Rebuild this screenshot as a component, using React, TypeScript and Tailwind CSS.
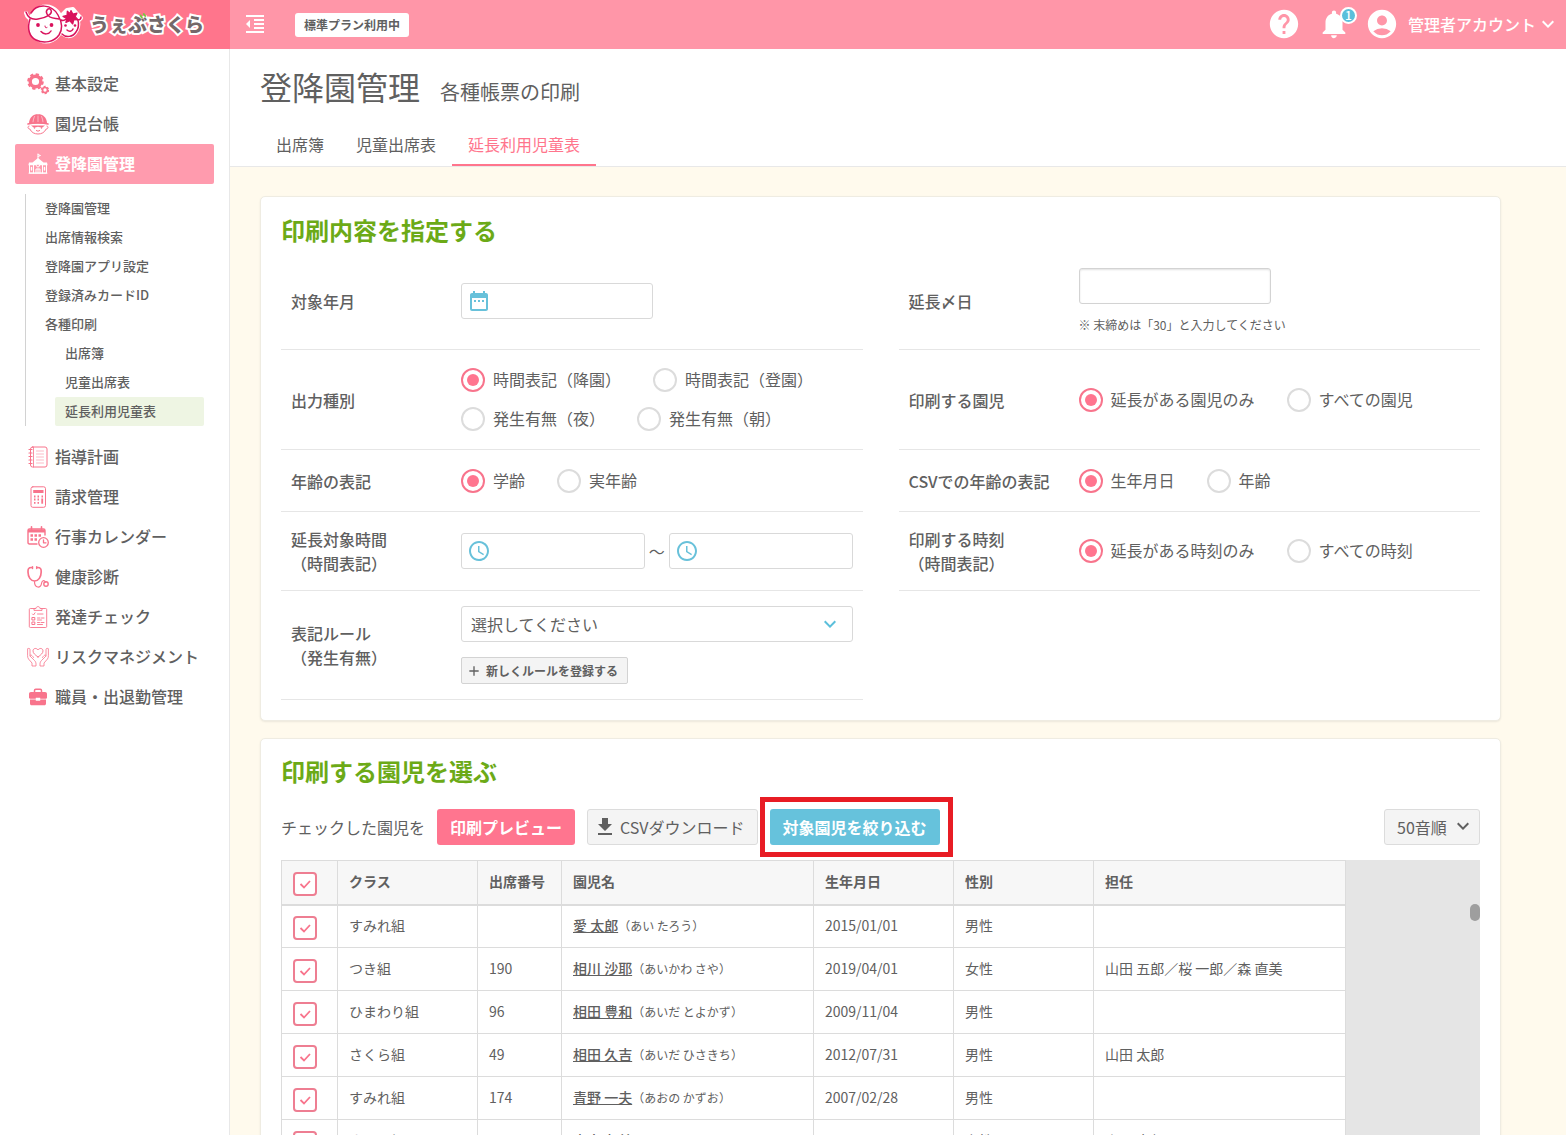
import React, { useState } from 'react';
import {
  MdAccessTime,
  MdAccountCircle,
  MdAdd,
  MdDateRange,
  MdExpandMore,
  MdFormatIndentDecrease,
  MdGetApp,
  MdHelp,
  MdNotifications,
} from 'react-icons/md';

/* ---------- logo ---------- */

function LogoMark() {
  return (
    <svg viewBox="0 0 60 44" className="mb-1 h-11 w-[60px] shrink-0" fill="none" aria-hidden="true">
      <g fill="#fff" stroke="#fff" strokeWidth="4" strokeLinejoin="round" strokeLinecap="round">
        <ellipse cx="22" cy="23" rx="16" ry="17.500" />
        <path d="M39 13c-3 6-3 14 0 20 4 3 9 3 12-1 3-4 4-8 3-12l3-3-3-3-5-6-6 1z" />
        <path d="M2 12c1 4 4 6 7 6" fill="none" />
      </g>
      <g stroke="#d9135d" strokeWidth="1.500" strokeLinecap="round" strokeLinejoin="round">
        <path d="M6 18c-3 9-1 18 6 21 8 4 18 2 23-5 4-6 3-13-1-20C28 3 13 2 7 12" />
        <path d="M2 11c2 6 6 8 12 7 8-1 15-5 13-9-2-3-6 0-4 4 2 5 8 4 12 5" />
        <path d="M38 33c4 4 11 3 14-2 3-4 3-8 2-12M53.500 19c2 0 3.500-1 3.500-3" />
        <path d="M37 19c2 1 4 0 5-1" />
        <path d="M17 30.500c3 3.500 8 3 10-.5" />
        <path d="M43 29c2 2 5 1.500 6-1" />
        <path d="M21 25c0 2 1 2 2 1.500" strokeWidth="1" />
      </g>
      <g fill="#d9135d">
        <circle cx="14" cy="24" r="1.900" />
        <circle cx="27.500" cy="24" r="1.900" />
        <circle cx="41.500" cy="24.500" r="1.300" />
        <circle cx="51" cy="24.500" r="1.300" />
        <path
          d="M47 9.500l1.800 3.500 4.200-1-1.800 3.700 2.800 3-4.300.3-1 4-3-3.300-3.800 1.800.7-3.900-3.600-2.200 4-1.200.3-4 2.700 2.200z"
          stroke="#d9135d"
          strokeWidth="1.200"
          strokeLinejoin="round"
        />
      </g>
    </svg>
  );
}

/* ---------- navigation icons ---------- */

type IconProps = { children: React.ReactNode };

function NavSvg({ children }: IconProps) {
  return (
    <svg
      viewBox="0 0 22 22"
      className="size-[22px] shrink-0"
      fill="none"
      stroke="currentColor"
      strokeWidth="1"
      strokeLinecap="round"
      strokeLinejoin="round"
      aria-hidden="true"
    >
      {children}
    </svg>
  );
}

const GearIcon = (
  <NavSvg>
    <circle cx="8.500" cy="8.500" r="5.300" strokeWidth="3.400" />
    <circle cx="8.500" cy="8.500" r="7.200" strokeWidth="2.200" strokeLinecap="butt" strokeDasharray="3.200 2.455" />
    <circle cx="18" cy="17" r="2.500" strokeWidth="1.700" />
    <circle cx="18" cy="17" r="3.600" strokeWidth="1.200" strokeLinecap="butt" strokeDasharray="2.100 1.670" />
  </NavSvg>
);

const ChildIcon = (
  <NavSvg>
    <path d="M2 10.500C2 5 6 1 11 1s9 4 9 9.500z" fill="currentColor" stroke="none" />
    <path d="M11 0.500v1M11 3v7M7.500 3.500C6.500 5.500 6 8 6 10M14.500 3.500C15.500 5.500 16 8 16 10" stroke="#fff" strokeWidth=".5" />
    <path d="M1 11c5-1.500 15-1.500 20 0" strokeWidth="1.600" />
    <path d="M2 13c-1.500 0-1.500 3 .8 3C4.500 19.500 7.500 21 11 21s6.500-1.500 8.200-5c2.300 0 2.300-3 .8-3" />
    <path d="M4 12.500h14l-3 2.300-4-1-4 1z" fill="currentColor" stroke="none" />
    <path d="M9.300 17.500c1 .9 2.400.9 3.400 0" />
    <circle cx="7.500" cy="15" r=".7" fill="currentColor" stroke="none" />
    <circle cx="14.500" cy="15" r=".7" fill="currentColor" stroke="none" />
  </NavSvg>
);

const SchoolIcon = (
  <NavSvg>
    <path d="M11 6V1M11 1.500l2.500 1L11 3.500" />
    <path d="M11 5l5.500 4.500h3.500l.6 2.800H1.400L2 9.500h3.500z" fill="currentColor" stroke="none" />
    <path d="M2.500 12v8h17v-8" />
    <path d="M6.500 12l4.500-3.500 4.500 3.500v8M6.500 12v8" />
    <circle cx="11" cy="12.500" r="1.500" fill="#ff9bae" />
    <path d="M9 20v-4h4v4M11 16v4" />
    <path d="M4.500 14.500v2.500M17.500 14.500v2.500" strokeWidth="1.400" />
    <path d="M2 20.200h18" />
  </NavSvg>
);

const NotebookIcon = (
  <NavSvg>
    <rect x="3.500" y="1" width="16.500" height="20" rx="2" />
    <path d="M6.500 1v20" strokeWidth=".8" />
    <path d="M2 3.500h3M2 7h3M2 10.500h3M2 14h3M2 17.500h3" strokeWidth="1.200" />
    <path d="M9.500 5h7M9.500 8h7M9.500 11h7M9.500 14h7M9.500 17h7" strokeWidth=".5" />
  </NavSvg>
);

const CalculatorIcon = (
  <NavSvg>
    <rect x="4" y=".8" width="14.500" height="20.500" rx="1.800" />
    <rect x="6.200" y="4" width="10.300" height="3" fill="currentColor" stroke="none" />
    <path d="M7 10.500h1.500M10.500 10.500H12M14.500 10.500h1.500M7 13.500h1.500M10.500 13.500H12M7 16.800h1.500M10.500 16.800H12" strokeWidth="1.800" strokeLinecap="butt" />
    <path d="M15.200 12.500v5.200" strokeWidth="1.800" strokeLinecap="butt" />
  </NavSvg>
);

const CalendarIcon = (
  <NavSvg>
    <path d="M10 18H2.500C1.500 18 1 17.500 1 16.500V4.500C1 3.500 1.500 3 2.500 3h14c1 0 1.500.500 1.500 1.500V9" strokeWidth="1.400" />
    <path d="M1 3.500h17v3H1z" fill="currentColor" stroke="none" />
    <path d="M4.500.8v3M14.500.8v3" strokeWidth="1.600" />
    <path d="M3.500 9.500H6M7.500 9.500H10M11.500 9.500H14M3.500 13.500H6M7.500 13.500H10" strokeWidth="2.300" strokeLinecap="butt" />
    <circle cx="16.500" cy="16.500" r="4.800" strokeWidth="1.300" />
    <path d="M16.500 13.800v3h2.500" strokeWidth="1.300" />
  </NavSvg>
);

const StethoscopeIcon = (
  <NavSvg>
    <path d="M4.500 1.500C1.500 1.500.9 3 1 6c.1 5 2.600 9 6.600 9s6.500-4 6.600-9c.1-3-.6-4.500-3.600-4.500" strokeWidth="1.700" />
    <path d="M5.500.8v1.600M9.700.8v1.600" strokeWidth="1.500" />
    <path d="M7.500 15.500c0 7 6.500 7 7 2 .3-3 2.500-4 4-1.500" strokeWidth="1.200" />
    <circle cx="19" cy="18" r="2.200" strokeWidth="1.400" />
  </NavSvg>
);

const ClipboardIcon = (
  <NavSvg>
    <path d="M7 2.500H3.300c-.6 0-1 .4-1 1v17c0 .6.400 1 1 1h15.400c.6 0 1-.4 1-1v-17c0-.6-.4-1-1-1H15" strokeWidth=".9" />
    <path d="M7 4V2.500h2c0-2.500 4-2.500 4 0h2V4z" strokeWidth=".9" />
    <path d="M5.500 8l1 1 1.500-2.200" strokeWidth=".9" />
    <rect x="5.300" y="11.500" width="2.500" height="2.500" />
    <rect x="5.300" y="16" width="2.500" height="2.500" />
    <path d="M10.500 8H16M10.500 12h2.500M14.500 12H17M10.500 14h4M10.500 16.500h2M14 16.500h3M10.500 18.500h5" strokeWidth=".9" />
  </NavSvg>
);

const HandsHeartIcon = (
  <NavSvg>
    <path d="M11 11C8 8.800 6 7.200 6 4.900 6 2.200 9.500 1.500 11 4c1.500-2.500 5-1.800 5 .9 0 2.300-2 3.900-5 6.100z" strokeWidth=".9" />
    <path d="M1 2.500c1.500-.6 2 .2 2 1.500v6l4.500 4.500c1 1 1.500 2 1.500 3.500V20H5v-3l-3.500-4C.8 12 .6 11 .6 10z" strokeWidth=".8" />
    <path d="M3 9.500c1-1 1.800-.5 3.500 2" strokeWidth=".8" />
    <path d="M21 2.500c-1.500-.6-2 .2-2 1.500v6l-4.500 4.500c-1 1-1.500 2-1.500 3.500V20h4v-3l3.500-4c.7-1 .9-2 .9-3z" strokeWidth=".8" />
    <path d="M19 9.500c-1-1-1.800-.5-3.500 2" strokeWidth=".8" />
  </NavSvg>
);

const BriefcaseIcon = (
  <NavSvg>
    <path d="M7.500 6V4.500c0-.8.400-1.200 1.200-1.200h4.600c.8 0 1.200.4 1.200 1.200V6" strokeWidth="1.500" />
    <path d="M4 6h14c1.400 0 2 .7 2 2v3.500c0 .8-.4 1.200-1.200 1.200h-5.600v-1H8.800v1H3.200c-.8 0-1.200-.4-1.200-1.200V8c0-1.300.6-2 2-2z" fill="currentColor" stroke="none" />
    <path d="M3 13.500h5.800v1.300h4.400v-1.300H19v3.900c0 1.200-.6 1.800-1.800 1.800H4.800c-1.200 0-1.800-.6-1.800-1.800z" fill="currentColor" stroke="none" />
  </NavSvg>
);

/* ---------- form parts ---------- */

function Radio({ name, label, defaultChecked }: { name: string; label: string; defaultChecked?: boolean }) {
  return (
    <label className="flex h-[30px] items-center gap-2 whitespace-nowrap">
      <input
        type="radio"
        name={name}
        defaultChecked={defaultChecked}
        className="grid size-6 shrink-0 appearance-none place-content-center rounded-full border-2 border-[#dcdcdc] bg-white before:size-3 before:rounded-full before:content-[''] checked:border-[#f8748c] checked:before:bg-[#ff758f]"
      />
      <span className="pb-[2px]">{label}</span>
    </label>
  );
}

function RadioRow({ name, options }: { name: string; options: string[] }) {
  return (
    <div className="flex flex-wrap gap-x-8 gap-y-[9px]">
      {options.map((o, i) => (
        <Radio key={o} name={name} label={o} defaultChecked={i === 0} />
      ))}
    </div>
  );
}

function Field({ label, sub, htmlFor, children }: { label: string; sub?: string; htmlFor?: string; children: React.ReactNode }) {
  const text = (
    <>
      {label}
      {sub && <span className="block">{sub}</span>}
    </>
  );
  return (
    <div className="flex min-h-[62px] items-center border-b border-[#e6e6e6]" role="group" aria-label={label}>
      <div className="w-[180px] shrink-0 pl-[10px] font-medium leading-6">
        {htmlFor ? <label htmlFor={htmlFor}>{text}</label> : text}
      </div>
      <div className="min-w-0 flex-1 py-[15px] pr-[10px]">{children}</div>
    </div>
  );
}

function IconInput({ id, label, icon, className }: { id: string; label: string; icon: React.ReactNode; className: string }) {
  return (
    <div className={'flex h-9 items-center rounded-[3px] border border-[#d9d9d9] bg-white pl-[5px] text-[#68c1da] ' + className}>
      {icon}
      <input id={id} aria-label={label} type="text" className="h-full min-w-0 flex-1 px-2 text-[#606060] outline-none" />
    </div>
  );
}

function Check({ label }: { label: string }) {
  const [on, setOn] = useState(true);
  return (
    <label className="relative mt-[5px] block size-6">
      <input
        type="checkbox"
        aria-label={label}
        checked={on}
        onChange={() => setOn(!on)}
        className="block size-6 appearance-none rounded-[4px] border-2 border-[#ee7e92] bg-white"
      />
      {on && (
        <svg viewBox="0 0 24 24" className="pointer-events-none absolute inset-0 size-6" fill="none" stroke="#f8748c" strokeWidth="1.800" aria-hidden="true">
          <path d="M7.500 12l3.500 3.500 6-6.500" />
        </svg>
      )}
    </label>
  );
}

/* ---------- data ---------- */

const navTop = [
  { label: '基本設定', icon: GearIcon },
  { label: '園児台帳', icon: ChildIcon },
];

const navBottom = [
  { label: '指導計画', icon: NotebookIcon },
  { label: '請求管理', icon: CalculatorIcon },
  { label: '行事カレンダー', icon: CalendarIcon },
  { label: '健康診断', icon: StethoscopeIcon },
  { label: '発達チェック', icon: ClipboardIcon },
  { label: 'リスクマネジメント', icon: HandsHeartIcon },
  { label: '職員・出退勤管理', icon: BriefcaseIcon },
];

const subNav = ['登降園管理', '出席情報検索', '登降園アプリ設定', '登録済みカードID', '各種印刷'];
const printNav = ['出席簿', '児童出席表', '延長利用児童表'];

const children = [
  { group: 'すみれ組', no: '', name: '愛 太郎', kana: 'あい たろう', birth: '2015/01/01', sex: '男性', staff: '' },
  { group: 'つき組', no: '190', name: '相川 沙耶', kana: 'あいかわ さや', birth: '2019/04/01', sex: '女性', staff: '山田 五郎／桜 一郎／森 直美' },
  { group: 'ひまわり組', no: '96', name: '相田 豊和', kana: 'あいだ とよかず', birth: '2009/11/04', sex: '男性', staff: '' },
  { group: 'さくら組', no: '49', name: '相田 久吉', kana: 'あいだ ひさきち', birth: '2012/07/31', sex: '男性', staff: '山田 太郎' },
  { group: 'すみれ組', no: '174', name: '青野 一夫', kana: 'あおの かずお', birth: '2007/02/28', sex: '男性', staff: '' },
  { group: 'さくら組', no: '52', name: '青木 友美', kana: 'あおき ともみ', birth: '2012/05/14', sex: '女性', staff: '山田 太郎' },
];

function NavItem({ label, icon }: { label: string; icon: React.ReactNode }) {
  return (
    <a href="#" className="flex h-10 items-center gap-[6px] pl-3 font-medium">
      <span className="text-[#f8748c]">{icon}</span>
      <span className="pb-[2px]">{label}</span>
    </a>
  );
}

const cardClass = 'rounded-[5px] border border-[#efece2] bg-white px-5 shadow-[0_1px_2px_rgba(0,0,0,0.08)]';
const headingClass = 'text-2xl leading-9 font-bold text-[#6caa17]';
const subLinkClass = 'block pb-[2px] leading-[27px]';

export default function App() {
  return (
    <div
      lang="ja"
      className="flex h-screen flex-col overflow-hidden bg-white font-['Noto_Sans_CJK_JP',sans-serif] text-base leading-6 text-[#606060]"
    >
      <header className="flex h-[49px] shrink-0 items-center bg-[#ff96a8] text-white">
        <a href="#" className="flex h-full w-[230px] shrink-0 items-center bg-[#ff758c] pl-6" aria-label="うぇぶさくら">
          <LogoMark />
          <span className="relative mb-[2px] ml-[6px] text-[19px] font-black text-[#75686a] [-webkit-text-stroke:4px_white] [paint-order:stroke_fill]">
            うぇぶさくら
            <svg viewBox="0 0 8 8" className="absolute top-0 left-[49px] size-2" fill="none" stroke="#7cc242" strokeWidth="2" strokeLinecap="round" aria-hidden="true">
              <path d="M1.500 3.500l1.300 2M4.800 2l1.400 2" />
            </svg>
          </span>
        </a>
        <button type="button" aria-label="メニューを閉じる" className="ml-[13px] pb-px">
          <MdFormatIndentDecrease size={24} />
        </button>
        <span className="ml-[28px] rounded-[3px] bg-white px-[9px] text-xs leading-6 font-bold text-[#606060]">標準プラン利用中</span>
        <div className="ml-auto flex items-center pb-[2px]">
          <button type="button" aria-label="ヘルプ" className="mr-4">
            <MdHelp size={34} />
          </button>
          <button type="button" aria-label="お知らせ" className="relative mr-[14px]">
            <MdNotifications size={34} />
            <span className="absolute top-0 left-[23px] flex size-[17px] items-center justify-center rounded-full border-2 border-white bg-[#5bbfdb] text-xs leading-none font-medium">
              1
            </span>
          </button>
          <button type="button" className="flex items-center pr-[6px] font-medium">
            <MdAccountCircle size={34} />
            <span className="ml-[9px]">管理者アカウント</span>
            <MdExpandMore size={24} />
          </button>
        </div>
      </header>

      <div className="flex min-h-0 flex-1">
        <nav className="w-[230px] shrink-0 border-r border-[#e8e8e8] px-[15px] pt-[15px]" aria-label="メインメニュー">
          {navTop.map((n) => (
            <NavItem key={n.label} {...n} />
          ))}
          <a href="#" className="flex h-10 items-center gap-[6px] rounded-[2px] bg-[#ff9bae] pl-3 font-bold text-white">
            {SchoolIcon}
            <span className="pb-[2px]">登降園管理</span>
          </a>
          <div className="mt-[10px] mb-[11px] ml-[10px] border-l border-[#d2d2d2] pr-[10px] pl-[19px] text-[13px] font-medium">
            {subNav.map((s) => (
              <a key={s} href="#" className={subLinkClass}>
                {s}
              </a>
            ))}
            <div className="ml-[10px]">
              {printNav.map((s, i) => (
                <a key={s} href="#" className={subLinkClass + ' pl-[10px]' + (i === 2 ? ' rounded-[2px] bg-[#eef5e3]' : '')}>
                  {s}
                </a>
              ))}
            </div>
          </div>
          {navBottom.map((n) => (
            <NavItem key={n.label} {...n} />
          ))}
        </nav>

        <main className="min-w-0 flex-1 overflow-y-auto bg-[#fffaed] [scrollbar-width:none]">
          <div className="border-b border-[#e8e8e8] bg-white">
            <div className="flex items-baseline gap-5 pt-[13px] pl-[30px]">
              <h1 className="text-[32px] leading-[48px]">登降園管理</h1>
              <p className="text-xl leading-6">各種帳票の印刷</p>
            </div>
            <div className="mt-[14px] flex pl-[30px]" role="tablist">
              <button type="button" role="tab" aria-selected="false" className="h-[42px] border-b-2 border-transparent px-4">
                出席簿
              </button>
              <button type="button" role="tab" aria-selected="false" className="h-[42px] border-b-2 border-transparent px-4">
                児童出席表
              </button>
              <button type="button" role="tab" aria-selected="true" className="h-[42px] border-b-2 border-[#ff758c] px-4 text-[#ff758c]">
                延長利用児童表
              </button>
            </div>
          </div>

          <div className="pt-[29px] pr-[65px] pl-[30px]">
            <section className={cardClass + ' pt-[15px] pb-5'}>
              <h2 className={headingClass}>印刷内容を指定する</h2>
              <div className="mt-[5px] grid grid-cols-2 gap-x-9">
                <Field label="対象年月" htmlFor="month">
                  <IconInput id="month" label="対象年月" icon={<MdDateRange size={24} />} className="w-48" />
                </Field>
                <Field label="延長〆日" htmlFor="closing">
                  <input
                    id="closing"
                    type="text"
                    className="block h-9 w-48 rounded-[3px] border border-[#d3d3d3] bg-white px-2 shadow-[inset_0_1px_2px_rgba(0,0,0,0.12)] outline-none"
                  />
                  <p className="mt-3 text-xs leading-[18px]">※ 末締めは「30」と入力してください</p>
                </Field>

                <Field label="出力種別">
                  <RadioRow name="output" options={['時間表記（降園）', '時間表記（登園）', '発生有無（夜）', '発生有無（朝）']} />
                </Field>
                <Field label="印刷する園児">
                  <RadioRow name="target" options={['延長がある園児のみ', 'すべての園児']} />
                </Field>

                <Field label="年齢の表記">
                  <RadioRow name="age" options={['学齢', '実年齢']} />
                </Field>
                <Field label="CSVでの年齢の表記">
                  <RadioRow name="csv-age" options={['生年月日', '年齢']} />
                </Field>

                <Field label="延長対象時間" sub="（時間表記）">
                  <div className="flex h-12 items-center">
                    <IconInput id="from" label="開始時刻" icon={<MdAccessTime size={24} />} className="min-w-0 flex-1" />
                    <span className="w-6 text-center">～</span>
                    <IconInput id="to" label="終了時刻" icon={<MdAccessTime size={24} />} className="min-w-0 flex-1" />
                  </div>
                </Field>
                <Field label="印刷する時刻" sub="（時間表記）">
                  <RadioRow name="time" options={['延長がある時刻のみ', 'すべての時刻']} />
                </Field>

                <Field label="表記ルール" sub="（発生有無）" htmlFor="rule">
                  <div className="relative">
                    <select id="rule" className="block h-9 w-full appearance-none rounded-[3px] border border-[#d9d9d9] bg-white pl-[9px]">
                      <option>選択してください</option>
                    </select>
                    <MdExpandMore size={24} className="pointer-events-none absolute top-[6px] right-[11px] text-[#5bbfdb]" />
                  </div>
                  <button
                    type="button"
                    className="mt-[15px] flex h-[27px] items-center gap-1 rounded-[2px] border border-[#d3d3d3] bg-[#f4f4f4] pr-[9px] pl-1 text-xs font-bold"
                  >
                    <MdAdd size={16} />
                    新しくルールを登録する
                  </button>
                </Field>
              </div>
            </section>

            <section className={cardClass + ' mt-[17px] pt-[14px]'}>
              <h2 className={headingClass}>印刷する園児を選ぶ</h2>
              <div className="mt-5 flex items-center gap-3">
                <span>チェックした園児を</span>
                <button type="button" className="h-9 rounded-[3px] bg-[#ff758f] px-[13px] font-bold text-white">
                  印刷プレビュー
                </button>
                <button type="button" className="flex h-9 items-center gap-[3px] rounded-[3px] border border-[#dcdcdc] bg-[#f4f4f4] pr-3 pl-[5px]">
                  <MdGetApp size={24} />
                  CSVダウンロード
                </button>
                <div className="relative">
                  <button type="button" className="h-9 rounded-[3px] bg-[#66c2dc] px-[13px] font-bold text-white">
                    対象園児を絞り込む
                  </button>
                  <span className="pointer-events-none absolute -inset-y-3 -right-[13px] -left-[10px] border-[5px] border-[#e81c24]" />
                </div>
                <div className="relative ml-auto">
                  <select aria-label="並び順" className="block h-9 w-24 appearance-none rounded-[3px] border border-[#dcdcdc] bg-[#f4f4f4] pl-3">
                    <option>50音順</option>
                  </select>
                  <MdExpandMore size={24} className="pointer-events-none absolute top-[5px] right-[5px]" />
                </div>
              </div>

              <div className="relative mt-[15px] bg-[#e5e5e5]">
                <table className="w-[1065px] table-fixed border-collapse bg-white text-left text-sm">
                  <colgroup>
                    <col className="w-14" />
                    <col className="w-[140px]" />
                    <col className="w-[84px]" />
                    <col className="w-[252px]" />
                    <col className="w-[140px]" />
                    <col className="w-[140px]" />
                    <col className="w-[252px]" />
                  </colgroup>
                  <thead>
                    <tr className="h-[44px] border-b-2 border-[#dcdcdc] bg-[#f7f7f7] [&>th]:border-x [&>th]:border-t [&>th]:border-[#dcdcdc] [&>th]:px-[11px] [&>th]:pb-[2px]">
                      <th>
                        <Check label="すべて選択" />
                      </th>
                      <th>クラス</th>
                      <th>出席番号</th>
                      <th>園児名</th>
                      <th>生年月日</th>
                      <th>性別</th>
                      <th>担任</th>
                    </tr>
                  </thead>
                  <tbody>
                    {children.map((c) => (
                      <tr key={c.name} className="h-[43px] border-b border-[#dcdcdc] [&>td]:border-x [&>td]:border-[#dcdcdc] [&>td]:px-[11px] [&>td]:pb-[2px]">
                        <td>
                          <Check label={c.name} />
                        </td>
                        <td>{c.group}</td>
                        <td>{c.no}</td>
                        <td>
                          <a href="#" className="font-medium underline">
                            {c.name}
                          </a>
                          <span className="text-xs">（{c.kana}）</span>
                        </td>
                        <td>{c.birth}</td>
                        <td>{c.sex}</td>
                        <td>{c.staff}</td>
                      </tr>
                    ))}
                  </tbody>
                </table>
                <span className="absolute top-11 right-0 h-[17px] w-[10px] rounded-full bg-[#9e9e9e]" />
              </div>
            </section>
          </div>
        </main>
      </div>
    </div>
  );
}
